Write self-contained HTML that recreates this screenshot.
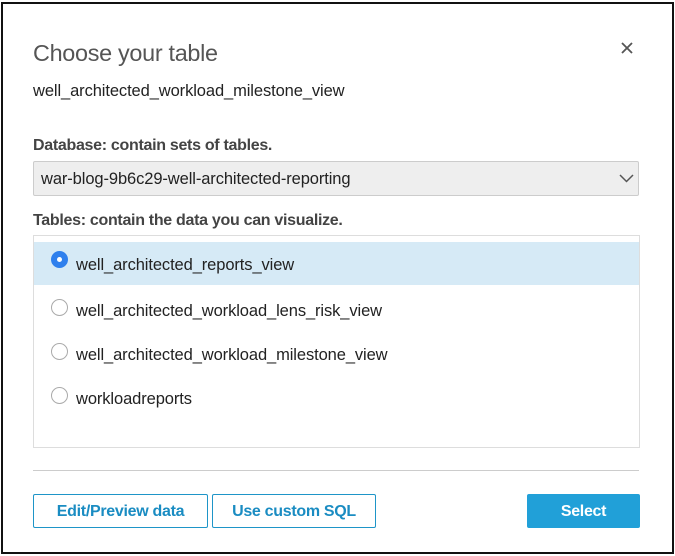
<!DOCTYPE html>
<html><head><meta charset="utf-8"><style>
*{margin:0;padding:0;box-sizing:border-box}
body{width:675px;height:556px;background:#fff;position:relative;overflow:hidden;font-family:"Liberation Sans",sans-serif;color:#333}
.frame{position:absolute;left:1px;top:2px;width:673px;height:552px;border:2px solid #111}
.a{position:absolute;white-space:nowrap}
.title{left:33px;top:40px;font-size:23.4px;color:#555;letter-spacing:-0.3px}
.sub{left:33px;top:82px;font-size:16.5px;color:#222;letter-spacing:-0.1px}
.lbl{font-size:16px;font-weight:bold;color:#444;letter-spacing:-0.3px}
.sel{left:33px;top:161px;width:606px;height:35px;background:#eee;border:1px solid #ccc;border-radius:2px}
.sel span{position:absolute;left:7px;top:8px;font-size:16.5px;color:#222;letter-spacing:-0.1px}
.list{left:33px;top:235px;width:607px;height:213px;border:1px solid #ddd}
.row{position:absolute;left:0;width:605px;height:43px}
.row.on{background:#d6eaf6;top:6px}
.radio{position:absolute;left:17px;width:17px;height:17px;border-radius:50%;border:1px solid #aaa;background:#fff}
.radio.on{background:#2f80ed;border-color:#2f80ed}
.radio.on:after{content:"";position:absolute;left:5px;top:5px;width:5px;height:5px;border-radius:50%;background:#fff}
.rt{position:absolute;left:42px;font-size:16.5px;color:#222;letter-spacing:-0.1px}
.div{left:33px;top:470px;width:606px;height:1px;background:#ccc}
.btn{position:absolute;top:494px;height:34px;border:1px solid #1e95c8;border-radius:2px;color:#1a8cc2;font-size:16px;font-weight:bold;text-align:center;line-height:33px;letter-spacing:-0.3px;background:#fff}
</style></head><body>
<div class="frame"></div>
<div class="a title">Choose your table</div>
<svg class="a" style="left:621px;top:42px" width="12" height="12" viewBox="0 0 12 12"><path d="M1 1L11 11M11 1L1 11" stroke="#555" stroke-width="1.8"/></svg>
<div class="a sub">well_architected_workload_milestone_view</div>
<div class="a lbl" style="left:33px;top:137px">Database: contain sets of tables.</div>
<div class="a sel"><span>war-blog-9b6c29-well-architected-reporting</span>
<svg style="position:absolute;left:585px;top:12px" width="15" height="9" viewBox="0 0 15 9"><path d="M1 1L7.5 7.5L14 1" fill="none" stroke="#555" stroke-width="1.5"/></svg></div>
<div class="a lbl" style="left:33px;top:212px">Tables: contain the data you can visualize.</div>
<div class="a list">
 <div class="row on"><div class="radio on" style="top:9px"></div><div class="rt" style="top:14px">well_architected_reports_view</div></div>
 <div class="radio" style="top:63px"></div><div class="rt" style="top:66px">well_architected_workload_lens_risk_view</div>
 <div class="radio" style="top:107px"></div><div class="rt" style="top:110px">well_architected_workload_milestone_view</div>
 <div class="radio" style="top:151px"></div><div class="rt" style="top:154px">workloadreports</div>
</div>
<div class="a div"></div>
<div class="btn" style="left:33px;width:175px">Edit/Preview data</div>
<div class="btn" style="left:212px;width:164px">Use custom SQL</div>
<div class="btn" style="left:527px;width:113px;background:#21a0d8;border-color:#21a0d8;color:#fff">Select</div>
</body></html>
